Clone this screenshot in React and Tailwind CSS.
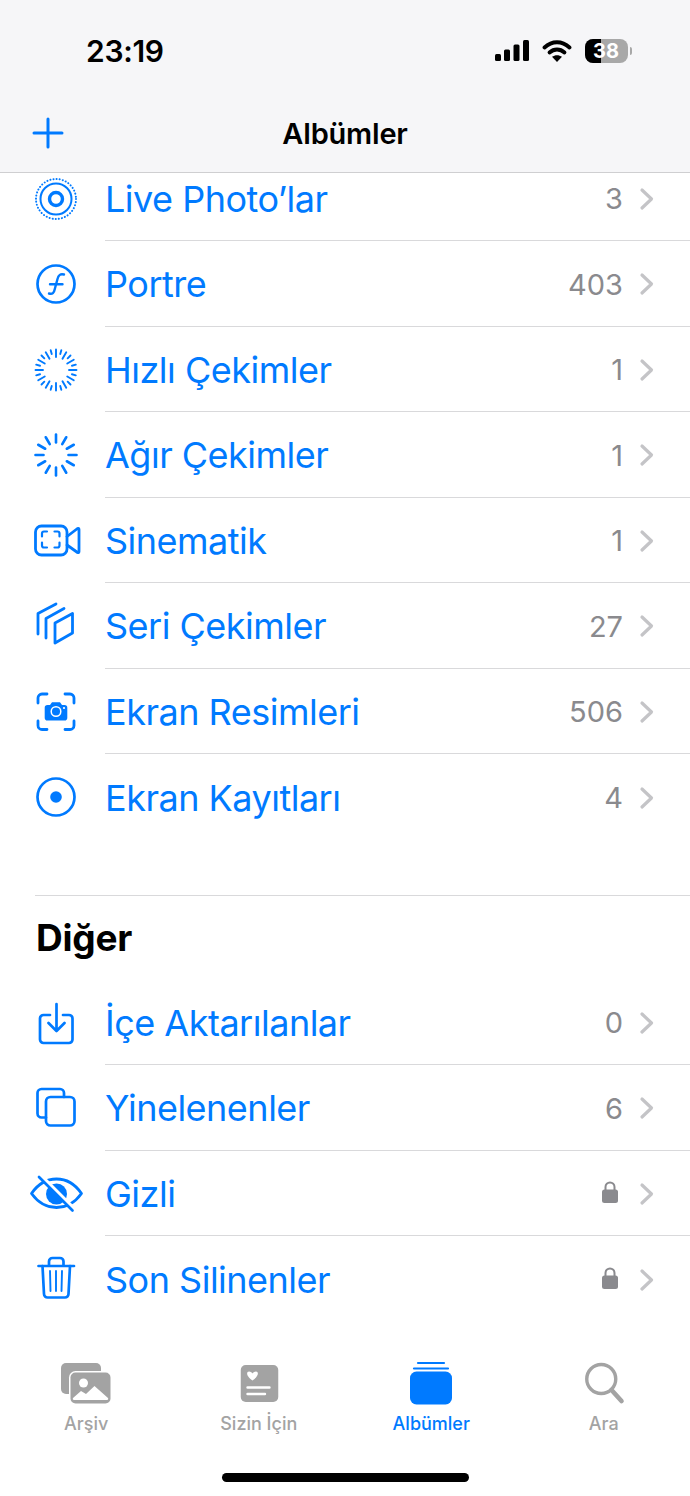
import React from "react";

const BLUE = "#007aff";

// ticks around a circle, used by the burst and slo-mo icons
// when shortInner is given every other tick is a short one
const Ticks = ({ count, inner, outer, width, shortInner }) => (
  <g stroke={BLUE} strokeWidth={width} strokeLinecap="round">
    {Array.from({ length: count }).map((_, i) => {
      const a = (i / count) * Math.PI * 2;
      const r = shortInner && i % 2 ? shortInner : inner;
      return (
        <line
          key={i}
          x1={Math.cos(a) * r}
          y1={Math.sin(a) * r}
          x2={Math.cos(a) * outer}
          y2={Math.sin(a) * outer}
        />
      );
    })}
  </g>
);

const icons = {
  live: (
    <>
      <circle r="20" stroke={BLUE} strokeWidth="2" strokeDasharray="0.1 3.04" strokeLinecap="round" fill="none" />
      <circle r="15.5" stroke={BLUE} strokeWidth="2" fill="none" />
      <circle r="6.5" stroke={BLUE} strokeWidth="3.4" fill="none" />
    </>
  ),
  portrait: (
    <>
      <circle r="18.5" stroke={BLUE} strokeWidth="2.7" fill="none" />
      <path d="M-7 9.5c3.5 1 5-.5 5.8-4.5L1.5-5c1-4 3-5.5 6.5-4.5M-6 .2H6.5" stroke={BLUE} strokeWidth="2.4" strokeLinecap="round" fill="none" />
    </>
  ),
  burst: <Ticks count={24} inner={13} outer={20.5} shortInner={16.5} width={1.9} />,
  slomo: <Ticks count={12} inner={12.5} outer={20.5} width={2.6} />,
  cinematic: (
    <g stroke={BLUE} fill="none" strokeLinecap="round" strokeLinejoin="round">
      <rect x="-20.5" y="-15" width="31.5" height="29" rx="6" strokeWidth="2.8" />
      <path d="M-14-4.500v-3a2 2 0 0 1 2-2h3M-1.500-9.500h3a2 2 0 0 1 2 2v3M3.500 1.500v3a2 2 0 0 1-2 2h-3M-9 6.500h-3a2 2 0 0 1-2-2v-3" strokeWidth="2.200" />
      <path d="M11-4.500 21.500-12.500q1.500-.7 1.500 1v22q0 1.700-1.500 1L11 4" strokeWidth="2.800" />
    </g>
  ),
  series: (
    <g stroke={BLUE} fill="none" strokeWidth="2.800" strokeLinecap="round" strokeLinejoin="round">
      <path d="M-1-3 16.500-12.500v19.500L-1 17z" />
      <path d="M-10 12V-7.500L8-17.500" />
      <path d="M-18 8V-12.500L0-22" />
    </g>
  ),
  screenshot: (
    <>
      <path d="M-18-9v-5a4 4 0 0 1 4-4h5M9-18h5a4 4 0 0 1 4 4v5M18 9v4.500a4 4 0 0 1-4 4H9M-9 17.500h-5a4 4 0 0 1-4-4V9" stroke={BLUE} strokeWidth="2.800" strokeLinecap="round" fill="none" />
      <path d="M-8.500-7h2.500l2-2.800h8L6-7h2.500a2.800 2.800 0 0 1 2.800 2.800v10a2.800 2.800 0 0 1-2.800 2.800h-17a2.800 2.800 0 0 1-2.800-2.800v-10A2.800 2.800 0 0 1-8.500-7z" fill={BLUE} />
      <circle cx="0" cy="-0.500" r="4.800" stroke="#fff" strokeWidth="1.500" fill={BLUE} />
      <circle cx="8" cy="-4" r="1.100" fill="#fff" />
    </>
  ),
  record: (
    <>
      <circle r="18.500" stroke={BLUE} strokeWidth="2.700" fill="none" />
      <circle r="5.800" fill={BLUE} />
    </>
  ),
  imports: (
    <g stroke={BLUE} fill="none" strokeWidth="2.700" strokeLinecap="round" strokeLinejoin="round">
      <path d="M-6-8h-6.500a3.500 3.500 0 0 0-3.500 3.500v21a3.500 3.500 0 0 0 3.500 3.500h25.500a3.500 3.500 0 0 0 3.500-3.500v-21A3.500 3.500 0 0 0 13-8H7" />
      <path d="M.500-19V7M-7.500 0 .500 8l8-8" />
    </g>
  ),
  duplicates: (
    <g stroke={BLUE} fill="none" strokeWidth="2.700" strokeLinejoin="round" strokeLinecap="round">
      <path d="M-10 9.500h-4.500a4 4 0 0 1-4-4V-15a4 4 0 0 1 4-4H4a4 4 0 0 1 4 4v4" />
      <rect x="-10" y="-11" width="28.500" height="28.500" rx="4.500" />
    </g>
  ),
  hidden: (
    <>
      <path d="M-24.500-.5C-18-10-9-15 .5-15S19-10 25.500-.5C19 8.500 10 13.500.5 13.500S-18 8.500-24.500-.5z" stroke={BLUE} strokeWidth="2.800" strokeLinejoin="round" fill="none" />
      <circle cx="0.500" cy="0" r="10.500" fill={BLUE} />
      <line x1="-14" y1="-17" x2="20" y2="17" stroke="#fff" strokeWidth="4" />
      <line x1="-17" y1="-17" x2="16.500" y2="16.500" stroke={BLUE} strokeWidth="2.700" strokeLinecap="round" />
    </>
  ),
  trash: (
    <g stroke={BLUE} fill="none" strokeLinecap="round" strokeLinejoin="round">
      <path d="M-17.500-13h35.500" strokeWidth="2.700" />
      <path d="M-7-13.500v-4a3.500 3.500 0 0 1 3.500-3.500h7.500a3.500 3.500 0 0 1 3.500 3.500v4" strokeWidth="2.700" />
      <path d="M-13.500-13-12 15a3.500 3.500 0 0 0 3.500 3.500H9a3.500 3.500 0 0 0 3.500-3.500L14-13" strokeWidth="2.700" />
      <path d="M-6-8-5.500 12M0-8V12M6-8 5.500 12" strokeWidth="1.900" />
    </g>
  ),
};

const Chevron = () => (
  <svg width="16" height="24" viewBox="0 0 16 24" className="ml-[16px]">
    <path d="M3 3l9.500 9L3 21" stroke="#c4c4c7" strokeWidth="3.200" strokeLinecap="round" strokeLinejoin="round" fill="none" />
  </svg>
);

const Lock = () => (
  <svg width="18" height="24" viewBox="0 0 18 24" className="mr-[4px] -mt-[3px]">
    <path d="M4.500 11V7a4.500 4.500 0 0 1 9 0v4" stroke="#8a8a8e" strokeWidth="2" fill="none" />
    <rect x="1" y="9.500" width="16" height="13.500" rx="2.500" fill="#8a8a8e" />
  </svg>
);

const Row = ({ icon, label, count, locked, last }) => (
  <div className="flex h-[85.5px] items-stretch">
    <div className="ml-[24px] mr-[17px] flex w-[64px] items-center pt-[1px]">
      <svg width="64" height="48" viewBox="-32 -24 64 48">{icons[icon]}</svg>
    </div>
    <div className={`flex flex-1 items-center pr-[35px] pt-[2px] ${last ? "" : "border-b border-[#d9d9db]"}`}>
      <span className="flex-1 text-[36px] tracking-[-0.5px] text-[#007aff]">{label}</span>
      {locked ? <Lock /> : <span className="text-[29px] text-[#8a8a8e]">{count}</span>}
      <Chevron />
    </div>
  </div>
);

const mediaRows = [
  { icon: "live", label: "Live Photo’lar", count: 3 },
  { icon: "portrait", label: "Portre", count: 403 },
  { icon: "burst", label: "Hızlı Çekimler", count: 1 },
  { icon: "slomo", label: "Ağır Çekimler", count: 1 },
  { icon: "cinematic", label: "Sinematik", count: 1 },
  { icon: "series", label: "Seri Çekimler", count: 27 },
  { icon: "screenshot", label: "Ekran Resimleri", count: 506 },
  { icon: "record", label: "Ekran Kayıtları", count: 4 },
];

const otherRows = [
  { icon: "imports", label: "İçe Aktarılanlar", count: 0 },
  { icon: "duplicates", label: "Yinelenenler", count: 6 },
  { icon: "hidden", label: "Gizli", locked: true },
  { icon: "trash", label: "Son Silinenler", locked: true },
];

const StatusIcons = () => (
  <div className="mr-[58px] flex items-center">
    <svg width="36" height="24" viewBox="0 0 36 24" className="mr-[12px]">
      <rect x="1" y="15" width="6" height="7" rx="1.500" fill="#000" />
      <rect x="10" y="10.500" width="6" height="11.500" rx="1.500" fill="#000" />
      <rect x="19.500" y="5.500" width="6" height="16.500" rx="1.500" fill="#000" />
      <rect x="29" y="1" width="6" height="21" rx="1.500" fill="#000" />
    </svg>
    <svg width="30" height="24" viewBox="0 0 30 24" className="mr-[13px]">
      <path d="M2.500 8.500C10 1.500 20 1.500 27.500 8.500" stroke="#000" strokeWidth="3.800" strokeLinecap="round" fill="none" />
      <path d="M7.500 13.500c4.500-4 10.500-4 15 0" stroke="#000" strokeWidth="3.800" strokeLinecap="round" fill="none" />
      <path d="M15 23l-5-5.200c3-2.200 7-2.200 10 0z" fill="#000" />
    </svg>
    <div className="relative flex h-[24px] w-[43px] overflow-hidden rounded-[8px] bg-[#a8a8a8]">
      <div className="h-full w-[16px] bg-black" />
      <span className="absolute inset-0 flex items-center justify-center pr-[1px] text-[20px] font-bold leading-none text-white">38</span>
    </div>
    <div className="ml-[2px] h-[8px] w-[2px] rounded-r-full bg-[#a8a8a8]" />
  </div>
);

const TabIcon = ({ children }) => (
  <svg width="64" height="46" viewBox="0 0 64 46" className="block">
    {children}
  </svg>
);

const GRAY = "#a3a3a3";

const tabs = [
  {
    label: "Arşiv",
    icon: (
      <>
        <rect x="7" y="2" width="40" height="31" rx="5" fill={GRAY} />
        <rect x="15" y="10" width="43" height="34" rx="6.500" fill="#fff" />
        <rect x="16.500" y="11.500" width="40" height="31" rx="5" fill={GRAY} />
        <circle cx="29.500" cy="22" r="4.500" fill="#fff" />
        <path d="M19 37l8-7 5 3 8.500-8L54 37q1 2-2 2H21q-3 0-2-2z" fill="#fff" />
      </>
    ),
  },
  {
    label: "Sizin İçin",
    icon: (
      <>
        <rect x="13.750" y="4" width="37.500" height="37" rx="5" fill={GRAY} />
        <path d="M25.500 19.500c-7-5-6-9-3.500-9 1.700 0 3 1 3.500 2 .5-1 1.800-2 3.500-2 2.500 0 3.500 4-3.500 9z" fill="#fff" />
        <path d="M20.500 26.500H42.500M20.500 33H38" stroke="#fff" strokeWidth="2.400" strokeLinecap="round" />
      </>
    ),
  },
  {
    label: "Albümler",
    active: true,
    icon: (
      <>
        <rect x="11" y="10.500" width="42" height="33" rx="6.500" fill={BLUE} />
        <path d="M15 7.500h34" stroke={BLUE} strokeWidth="2.200" strokeLinecap="round" />
        <path d="M19 2h26" stroke={BLUE} strokeWidth="2.200" strokeLinecap="round" />
      </>
    ),
  },
  {
    label: "Ara",
    icon: (
      <>
        <circle cx="29.250" cy="18" r="14.500" stroke={GRAY} strokeWidth="3.400" fill="none" />
        <path d="M39.500 29l10 11" stroke={GRAY} strokeWidth="4.600" strokeLinecap="round" />
      </>
    ),
  },
];

const App = () => {
  return (
    <div
      className="flex h-[1496px] w-[690px] flex-col overflow-hidden bg-white"
      style={{ fontFamily: "Inter, 'Noto Sans', sans-serif" }}
    >
      {/* status bar + nav bar */}
      <header className="relative z-10 h-[173px] shrink-0 border-b border-[#cfcfd1] bg-[#f6f6f8]">
        <div className="flex h-[102px] items-center justify-between pl-[86px]">
          <span className="text-[30px] font-semibold leading-none tracking-[-0.3px] text-black">23:19</span>
          <StatusIcons />
        </div>
        <div className="relative flex h-[64px] items-center justify-center">
          <svg width="32" height="32" viewBox="0 0 32 32" className="absolute left-[32px] top-[15px]">
            <path d="M16 2v28M2 16h28" stroke={BLUE} strokeWidth="3" strokeLinecap="round" />
          </svg>
          <span className="text-[29px] font-semibold tracking-[-0.2px] text-black">Albümler</span>
        </div>
      </header>

      <main className="min-h-0 flex-1 overflow-hidden">
        <div className="-mt-[17.5px]">
          {mediaRows.map((r, i) => (
            <Row key={r.label} {...r} last={i === mediaRows.length - 1} />
          ))}
          <div className="ml-[35px] mt-[55.5px] border-t border-[#d9d9db]">
            <h2 className="flex h-[83.5px] items-center pl-px text-[37px] font-bold tracking-[-0.2px] text-black">Diğer</h2>
          </div>
          {otherRows.map((r, i) => (
            <Row key={r.label} {...r} last={i === otherRows.length - 1} />
          ))}
        </div>
      </main>

      {/* tab bar */}
      <nav className="relative h-[174px] shrink-0 bg-white pt-[39px]">
        <div className="grid grid-cols-4">
          {tabs.map((t) => (
            <div key={t.label} className="flex flex-col items-center">
              <TabIcon>{t.icon}</TabIcon>
              <span className={`mt-[6px] text-[18px] font-medium leading-[22px] ${t.active ? "text-[#007aff]" : "text-[#a3a3a3]"}`}>
                {t.label}
              </span>
            </div>
          ))}
        </div>
        <div className="absolute bottom-[14px] left-[222px] h-[9px] w-[247px] rounded-full bg-black" />
      </nav>
    </div>
  );
};

export default App;
